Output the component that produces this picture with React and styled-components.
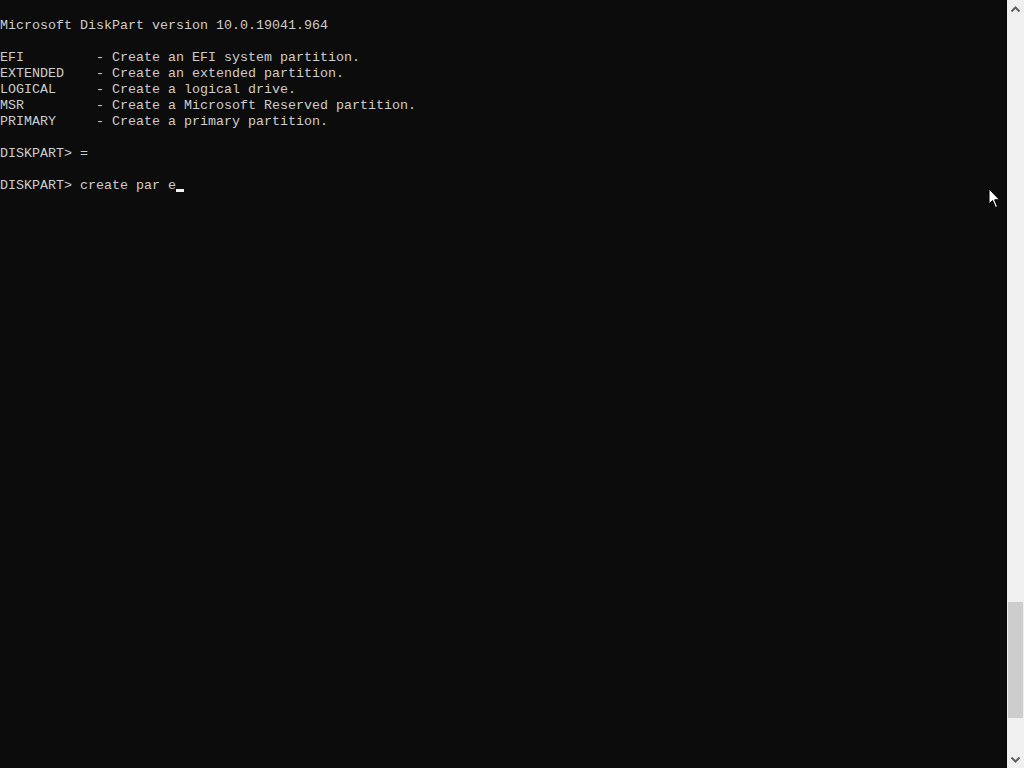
import React from 'react'
import styled, { createGlobalStyle } from 'styled-components'

const Global = createGlobalStyle`
    html, body {
        margin: 0;
        padding: 0;
        background: #0c0c0c;
        overflow: hidden;
    }
`

const lines = [
    '',
    'Microsoft DiskPart version 10.0.19041.964',
    '',
    'EFI         - Create an EFI system partition.',
    'EXTENDED    - Create an extended partition.',
    'LOGICAL     - Create a logical drive.',
    'MSR         - Create a Microsoft Reserved partition.',
    'PRIMARY     - Create a primary partition.',
    '',
    'DISKPART> =',
    '',
]

function App() {
    return (
        <Window>
            <Global />
            <Console>
                {lines.map((l, i) => (
                    <Line key={i}>{l}</Line>
                ))}
                <Line>
                    DISKPART&gt; create par e<Caret />
                </Line>
                <Pointer width="13" height="21" viewBox="0 0 13 21">
                    <path
                        d="M1 1 L1 16 L4.5 12.5 L7.5 19.5 L9.5 18.6 L6.6 11.8 L11.5 11.8 Z"
                        fill="#ffffff"
                        stroke="#000000"
                        strokeWidth="1"
                        strokeLinejoin="miter"
                    />
                </Pointer>
            </Console>
            <ScrollBar>
                <Arrow>
                    <svg width="9" height="6" viewBox="0 0 9 6">
                        <path d="M0.5 5.5 L4.5 1.5 L8.5 5.5" fill="none" stroke="#606060" strokeWidth="2" />
                    </svg>
                </Arrow>
                <Track>
                    <Thumb />
                </Track>
                <Arrow>
                    <svg width="9" height="6" viewBox="0 0 9 6">
                        <path d="M0.5 0.5 L4.5 4.5 L8.5 0.5" fill="none" stroke="#606060" strokeWidth="2" />
                    </svg>
                </Arrow>
            </ScrollBar>
        </Window>
    )
}

export default App

const Window = styled.div`
    display: flex;
    width: 1024px;
    height: 768px;
    background: #0c0c0c;
`
const Console = styled.div`
    position: relative;
    flex: 1;
    padding-top: 2px;
    font-family: 'Liberation Mono', 'DejaVu Sans Mono', monospace;
    font-size: 13.333px;
    line-height: 16px;
    color: #cccccc;
    white-space: pre;
`
const Line = styled.div`
    height: 16px;
`
const Caret = styled.span`
    display: inline-block;
    width: 8px;
    height: 3px;
    background: #f2f2f2;
    vertical-align: -3px;
`
const Pointer = styled.svg`
    position: absolute;
    left: 988px;
    top: 188px;
`
const ScrollBar = styled.div`
    width: 17px;
    display: flex;
    flex-direction: column;
    background: #f0f0f0;
`
const Arrow = styled.div`
    height: 17px;
    display: flex;
    align-items: center;
    justify-content: center;
`
const Track = styled.div`
    flex: 1;
    display: flex;
    flex-direction: column;
    padding: 0 1px;
`
const Thumb = styled.div`
    margin-top: 585px;
    height: 116px;
    background: #cdcdcd;
`
